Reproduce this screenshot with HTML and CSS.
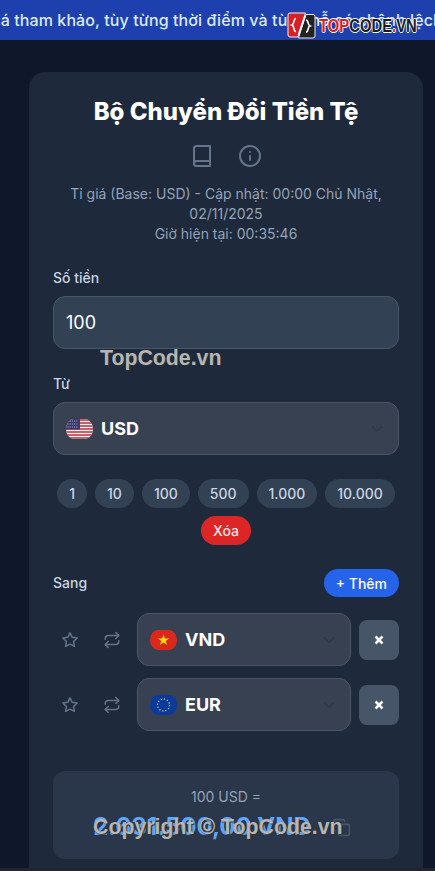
FILE: index.html
```html
<!DOCTYPE html>
<html lang="vi">
<head>
<meta charset="utf-8">
<title>Bộ Chuyển Đổi Tiền Tệ</title>
<link rel="stylesheet" href="styles.css">
</head>
<body>
<div class="banner"><span class="banner-text">Đây chỉ là giá tham khảo, tùy từng thời điểm và tùy chỗ có chênh lệch</span></div>
<main class="page">
  <section class="card">
    <h1 class="title">Bộ Chuyển Đổi Tiền Tệ</h1>
    <div class="tools">
      <svg class="tool" viewBox="0 0 24 24"><path d="M4 19.500A2.500 2.500 0 0 1 6.500 17H20"/><path d="M6.500 2H20v20H6.500A2.500 2.500 0 0 1 4 19.500v-15A2.500 2.500 0 0 1 6.500 2z"/></svg>
      <svg class="tool" viewBox="0 0 24 24"><circle cx="12" cy="12" r="10"/><path d="M12 16v-4"/><path d="M12 8h.01"/></svg>
    </div>
    <p class="meta">Tỉ giá (Base: USD) - Cập nhật: 00:00 Chủ Nhật, 02/11/2025<br>Giờ hiện tại: 00:35:46</p>

    <div class="label">Số tiền</div>
    <div class="amount">100</div>

    <div class="label from">Từ</div>
    <div class="select">
      <svg class="flag" viewBox="0 0 27 20"><defs><clipPath id="f1"><rect width="27" height="20" rx="8" ry="10"/></clipPath></defs><g clip-path="url(#f1)"><rect width="27" height="20" fill="#f1f1f4"/><path d="M0 1h27M0 4h27M0 7h27M0 10h27M0 13h27M0 16h27M0 19h27" stroke="#b8323f" stroke-width="1.500"/><rect width="14" height="10.500" fill="#3c3b6e"/><path d="M1.500 2h11M1.500 5h11M1.500 8h11" stroke="#aab0d0" stroke-width="1" stroke-dasharray="1 1.200"/></g></svg>
      <span class="code">USD</span>
      <svg class="chev" viewBox="0 0 24 24"><path d="m6 9 6 6 6-6"/></svg>
    </div>

    <div class="chips">
      <span class="chip">1</span><span class="chip">10</span><span class="chip">100</span><span class="chip">500</span><span class="chip">1.000</span><span class="chip">10.000</span><span class="chip danger">Xóa</span>
    </div>

    <div class="to-head">
      <span class="label flat">Sang</span>
      <span class="add">+ Thêm</span>
    </div>

    <div class="rows">
      <div class="row">
        <svg class="ico" viewBox="0 0 24 24"><path d="M12 2.500l2.940 5.960 6.580.96-4.760 4.640 1.120 6.550L12 17.520l-5.880 3.090 1.120-6.550-4.760-4.640 6.580-.96z"/></svg>
        <svg class="ico" viewBox="0 0 24 24"><path d="m17 2 4 4-4 4"/><path d="M3 11v-1a4 4 0 0 1 4-4h14"/><path d="m7 22-4-4 4-4"/><path d="M21 13v1a4 4 0 0 1-4 4H3"/></svg>
        <div class="select grow">
          <svg class="flag" viewBox="0 0 27 20"><defs><clipPath id="f2"><rect width="27" height="20" rx="8" ry="10"/></clipPath></defs><g clip-path="url(#f2)"><rect width="27" height="20" fill="#da291c"/><path d="M13.500 4.500l1.400 3.900h4.200l-3.400 2.500 1.300 4.100-3.500-2.500-3.500 2.500 1.300-4.100-3.400-2.500h4.200z" fill="#ffdd00"/></g></svg>
          <span class="code">VND</span>
          <svg class="chev" viewBox="0 0 24 24"><path d="m6 9 6 6 6-6"/></svg>
        </div>
        <span class="remove"><svg viewBox="0 0 12 12"><path d="M2.500 2.500l7 7M9.500 2.500l-7 7"/></svg></span>
      </div>
      <div class="row">
        <svg class="ico" viewBox="0 0 24 24"><path d="M12 2.500l2.940 5.960 6.580.96-4.760 4.640 1.120 6.550L12 17.520l-5.880 3.090 1.120-6.550-4.760-4.640 6.580-.96z"/></svg>
        <svg class="ico" viewBox="0 0 24 24"><path d="m17 2 4 4-4 4"/><path d="M3 11v-1a4 4 0 0 1 4-4h14"/><path d="m7 22-4-4 4-4"/><path d="M21 13v1a4 4 0 0 1-4 4H3"/></svg>
        <div class="select grow">
          <svg class="flag" viewBox="0 0 27 20"><defs><clipPath id="f3"><rect width="27" height="20" rx="8" ry="10"/></clipPath></defs><g clip-path="url(#f3)"><rect width="27" height="20" fill="#0b3a9c"/><circle cx="13.500" cy="10" r="6" fill="none" stroke="#e8dc7a" stroke-width="1.300" stroke-dasharray="1.100 2"/></g></svg>
          <span class="code">EUR</span>
          <svg class="chev" viewBox="0 0 24 24"><path d="m6 9 6 6 6-6"/></svg>
        </div>
        <span class="remove"><svg viewBox="0 0 12 12"><path d="M2.500 2.500l7 7M9.500 2.500l-7 7"/></svg></span>
      </div>
    </div>

    <div class="result">
      <div class="result-sub">100 USD =</div>
      <div class="result-main">
        <span class="result-val">2.631.500,00 VND</span>
        <svg class="copy" viewBox="0 0 24 24"><rect x="8" y="8" width="14" height="14" rx="2"/><path d="M4 16c-1.100 0-2-.9-2-2V4c0-1.100.9-2 2-2h10c1.100 0 2 .9 2 2"/></svg>
      </div>
    </div>
  </section>
</main>
<div class="strip"></div>

<div class="logo">
  <svg class="logo-mark" viewBox="0 0 29 27"><path d="M3 1h15.500L11 25H3a2 2 0 0 1-2-2V3a2 2 0 0 1 2-2z" fill="#d81f26" stroke="#f3f3f3"/><path d="M19 2.500h7a2 2 0 0 1 2 2V24a2 2 0 0 1-2 2H11.500z" fill="#222" stroke="#e8e8e8"/><path d="M18 4 11.500 23" stroke="#fff" stroke-width="1.800"/><path d="M9 6.500c-3 0-1 5.500-4 6.500 3 1 1 6.500 4 6.500M19 8c3 0 1 5 4 6-3 1-1 6-4 6" fill="none" stroke="#fff" stroke-width="1.600"/></svg>
  <span class="logo-text"><span class="logo-red">TOP</span>CODE<span class="logo-red">.</span>VN</span>
</div>
<div class="mark mark-a">TopCode.vn</div>
<div class="mark mark-b">Copyright © TopCode.vn</div>
</body>
</html>
```
FILE: styles.css
```css
* { box-sizing: border-box; }
html, body { margin: 0; height: 871px; overflow: hidden; }
body {
  position: relative;
  display: flex;
  flex-direction: column;
  background: #0f172a;
  font-family: Inter, "Noto Sans", sans-serif;
  color: #fff;
}
.banner {
  height: 40px;
  flex: none;
  background: #1e40af;
  display: flex;
  align-items: center;
  overflow: hidden;
  white-space: nowrap;
  color: #dbeafe;
  font-size: 16px;
  font-weight: 500;
}
.banner-text { margin-left: -93px; letter-spacing: 0.1px; }
.page {
  flex: 1;
  min-height: 0;
  overflow: hidden;
  padding: 32px 12px 0 29px;
}
.strip { height: 3px; flex: none; background: #22262b; }
.card {
  background: #1e293b;
  border-radius: 16px;
  padding: 24px;
  height: 900px;
}
.title {
  margin: 0;
  font-size: 24px;
  line-height: 32px;
  font-weight: 800;
  text-align: center;
}
.tools {
  display: flex;
  justify-content: center;
  gap: 24px;
  margin-top: 16px;
  height: 24px;
}
.tool {
  width: 24px;
  height: 24px;
  fill: none;
  stroke: #64748b;
  stroke-width: 2;
  stroke-linecap: round;
  stroke-linejoin: round;
}
.meta {
  margin: 16px 0 0;
  color: #94a3b8;
  font-size: 14px;
  line-height: 20px;
  text-align: center;
}
.label {
  margin-top: 24px;
  color: #cbd5e1;
  font-size: 14px;
  font-weight: 500;
  line-height: 20px;
}
.label.from { margin-top: 25px; }
.label.flat { margin: 0; }
.amount {
  margin-top: 8px;
  height: 53px;
  display: flex;
  align-items: center;
  padding: 0 12px;
  background: #334155;
  border: 1px solid #475569;
  border-radius: 12px;
  font-size: 18px;
}
.select {
  margin-top: 8px;
  height: 53px;
  display: flex;
  align-items: center;
  gap: 8px;
  padding: 0 12px;
  background: #374151;
  border: 1px solid #4b5563;
  border-radius: 12px;
}
.select.grow { flex: 1; margin-top: 0; min-width: 0; }
.flag { width: 27px; height: 20px; flex: none; }
.code { flex: 1; font-size: 18px; font-weight: 700; }
.chev {
  width: 18px;
  height: 18px;
  fill: none;
  stroke: #2f3947;
  stroke-width: 2;
  stroke-linecap: round;
  stroke-linejoin: round;
}
.chips {
  display: flex;
  flex-wrap: wrap;
  justify-content: center;
  gap: 8px;
  margin-top: 24px;
}
.chip {
  height: 29px;
  display: flex;
  align-items: center;
  padding: 0 12px;
  background: #334155;
  border-radius: 999px;
  color: #cbd5e1;
  font-size: 14px;
  font-weight: 500;
}
.chip.danger { background: #dc2626; color: #fee2e2; }
.to-head {
  display: flex;
  justify-content: space-between;
  align-items: center;
  margin-top: 24px;
}
.add {
  height: 28px;
  display: flex;
  align-items: center;
  padding: 0 12px;
  background: #2563eb;
  border-radius: 999px;
  font-size: 14px;
  font-weight: 500;
}
.rows {
  display: flex;
  flex-direction: column;
  gap: 12px;
  margin-top: 16px;
}
.row { display: flex; align-items: center; gap: 8px; padding-left: 8px; }
.ico {
  width: 18px;
  height: 18px;
  margin-right: 16px;
  flex: none;
  fill: none;
  stroke: #64748b;
  stroke-width: 2;
  stroke-linecap: round;
  stroke-linejoin: round;
}
.ico + .ico { margin-right: 8px; }
.remove {
  width: 40px;
  height: 40px;
  flex: none;
  display: flex;
  align-items: center;
  justify-content: center;
  background: #475569;
  border-radius: 8px;
}
.remove svg {
  width: 12px;
  height: 12px;
  fill: none;
  stroke: #fff;
  stroke-width: 2.500;
}
.result {
  margin-top: 40px;
  height: 88px;
  padding: 16px;
  background: #2a374a;
  border-radius: 12px;
  text-align: center;
}
.result-sub { color: #94a3b8; font-size: 14px; line-height: 20px; }
.result-main {
  display: flex;
  align-items: center;
  justify-content: center;
  gap: 21px;
  margin-top: 4px;
  padding-right: 8px;
}
.result-val { color: #60a5fa; font-size: 24px; line-height: 32px; font-weight: 700; }
.copy {
  width: 19px;
  height: 19px;
  flex: none;
  fill: none;
  stroke: #475569;
  stroke-width: 2;
  stroke-linecap: round;
  stroke-linejoin: round;
}
.logo {
  position: absolute;
  left: 287px;
  top: 12px;
  display: flex;
  align-items: center;
  gap: 3px;
}
.logo-mark { width: 29px; height: 27px; }
.logo-text {
  display: inline-block;
  width: 93px;
  white-space: nowrap;
  font-family: "Liberation Sans", sans-serif;
  font-size: 19px;
  font-weight: 700;
  color: #1b1b1b;
  text-shadow: 1px 0 #fff, -1px 0 #fff, 0 1px #fff, 0 -1px #fff;
  transform: scaleX(0.78);
  transform-origin: left center;
}
.logo-red { color: #d81f26; }
.mark {
  position: absolute;
  font-family: "Liberation Sans", sans-serif;
  font-weight: 700;
  color: #b5b5b5;
  text-shadow: 1px 1px 1px #333;
  white-space: nowrap;
}
.mark-a { left: 100px; top: 346px; font-size: 21.3px; }
.mark-b { left: 93px; top: 815px; font-size: 21.3px; }
```
